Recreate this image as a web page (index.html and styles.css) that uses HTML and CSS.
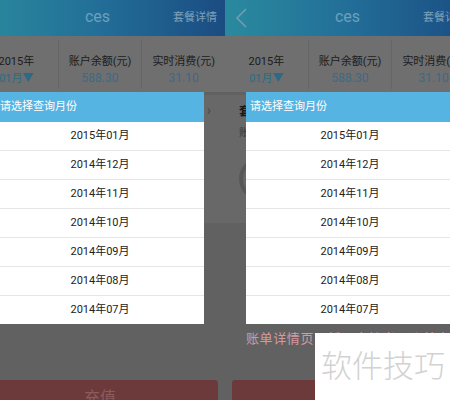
FILE: index.html
```html
<!DOCTYPE html>
<html lang="zh-CN">
<head>
    <meta charset="UTF-8">
    <meta name="viewport" content="width=device-width, initial-scale=1.0">
    <title>ces - 账单查询</title>
    <link rel="stylesheet" href="styles.css">
</head>
<body>
    <div class="screens">
        <!-- first phone: month picker open -->
        <div class="phone first">
            <div class="topbar">
                <span class="back"></span>
                <span class="title">ces</span>
                <span class="more">套餐详情</span>
            </div>
            <div class="stats">
                <div class="stat">
                    <div class="label">2015年</div>
                    <div class="month">01月▼</div>
                </div>
                <div class="stat">
                    <div class="label">账户余额(元)</div>
                    <div class="value">588.30</div>
                </div>
                <div class="stat">
                    <div class="label">实时消费(元)</div>
                    <div class="value">31.10</div>
                </div>
            </div>
            <div class="content">
                <div class="card">
                    <div class="card-head">
                        <span class="card-title">套餐使用情况</span>
                        <span class="chevron">›</span>
                    </div>
                    <div class="card-sub">账单周期 2015.01.01-2015.01.31</div>
                    <div class="rings">
                        <span class="ring"></span>
                        <span class="ring"></span>
                        <span class="ring"></span>
                    </div>
                </div>
            </div>
            <div class="actions">
                <button class="pay">充值</button>
            </div>

            <div class="picker">
                <div class="picker-title">请选择查询月份</div>
                <div class="picker-item">2015年01月</div>
                <div class="picker-item">2014年12月</div>
                <div class="picker-item">2014年11月</div>
                <div class="picker-item">2014年10月</div>
                <div class="picker-item">2014年09月</div>
                <div class="picker-item">2014年08月</div>
                <div class="picker-item">2014年07月</div>
            </div>
        </div>

        <!-- second phone: same picker, with the bill notice below -->
        <div class="phone">
            <div class="topbar">
                <span class="back">
                    <svg width="14" height="22" viewBox="0 0 14 22">
                        <path d="M12 2 L3 11 L12 20" fill="none" stroke="#6f9cb6" stroke-width="1.6"/>
                    </svg>
                </span>
                <span class="title">ces</span>
                <span class="more">套餐详情</span>
            </div>
            <div class="stats">
                <div class="stat">
                    <div class="label">2015年</div>
                    <div class="month">01月▼</div>
                </div>
                <div class="stat">
                    <div class="label">账户余额(元)</div>
                    <div class="value">588.30</div>
                </div>
                <div class="stat">
                    <div class="label">实时消费(元)</div>
                    <div class="value">31.10</div>
                </div>
            </div>
            <div class="content">
                <div class="card">
                    <div class="card-head">
                        <span class="card-title">套餐使用情况</span>
                        <span class="chevron">›</span>
                    </div>
                    <div class="card-sub">账单周期 2015.01.01-2015.01.31</div>
                    <div class="rings">
                        <span class="ring"></span>
                        <span class="ring"></span>
                        <span class="ring"></span>
                    </div>
                </div>
                <div class="notice">账单详情页面暂不支持当月账单查询</div>
            </div>
            <div class="actions">
                <button class="pay">充值</button>
            </div>

            <div class="picker">
                <div class="picker-title">请选择查询月份</div>
                <div class="picker-item">2015年01月</div>
                <div class="picker-item">2014年12月</div>
                <div class="picker-item">2014年11月</div>
                <div class="picker-item">2014年10月</div>
                <div class="picker-item">2014年09月</div>
                <div class="picker-item">2014年08月</div>
                <div class="picker-item">2014年07月</div>
            </div>
        </div>
    </div>

    <div class="stamp">软件技巧</div>
</body>
</html>
```

FILE: styles.css
```css
body {
    margin: 0;
    width: 450px;
    height: 400px;
    overflow: hidden;
    position: relative;
    background: #616161;
    font-family: Roboto, "Noto Sans CJK SC", sans-serif;
}
.screens {
    display: flex;
    margin-left: -25px;
}
.phone {
    position: relative;
    flex: 0 0 250px;
    height: 424px;
    display: flex;
    flex-direction: column;
    background: #616161;
}
.phone.first {
    box-shadow: 1px 0 0 #5a5a5a;
}

/* title bar, dimmed by the open dialog */
.topbar {
    height: 36px;
    flex: 0 0 36px;
    display: flex;
    align-items: center;
    padding: 0 0 4px 9px;
    box-sizing: border-box;
    background: linear-gradient(90deg, #2a8a9e 0%, #226e98 50%, #1b4c82 100%);
}
.back {
    width: 14px;
    height: 22px;
    display: flex;
    margin-top: 4px;
}
.title {
    flex: 1;
    text-align: center;
    color: #6ca0bc;
    font-size: 16px;
    margin-left: 24px;
}
.more {
    width: 52px;
    color: #7ca2ba;
    font-size: 11px;
}

.stats {
    flex: 0 0 56px;
    display: flex;
    background: #6f6f6f;
}
.stat {
    flex: 1;
    text-align: center;
    padding-top: 15px;
    box-sizing: border-box;
    border-left: 1px solid #656565;
    margin: 4px 0 3px;
}
.stat:first-child {
    border-left: none;
}
.label {
    font-size: 11px;
    line-height: 17px;
    color: #1c1c1c;
    margin-top: -2px;
}
.month {
    font-size: 11px;
    line-height: 17px;
    color: #2c6a86;
}
.value {
    font-size: 12px;
    line-height: 17px;
    color: #3c6a86;
}

.content {
    flex: 1;
    display: flex;
    flex-direction: column;
    padding-top: 3px;
}
.card {
    height: 128px;
    background: #686868;
    padding: 0 14px;
}
.card-head {
    display: flex;
    justify-content: space-between;
    align-items: center;
    height: 30px;
}
.card-title {
    font-size: 12px;
    font-weight: bold;
    color: #1a1a1a;
}
.chevron {
    color: #4a4a4a;
    font-size: 14px;
}
.card-sub {
    font-size: 10px;
    color: #3a3a3a;
    line-height: 16px;
}
.rings {
    display: flex;
    gap: 26px;
    margin-top: 16px;
}
.ring {
    width: 44px;
    height: 44px;
    border-radius: 50%;
    border: 4px solid #585858;
    box-sizing: border-box;
}
.notice {
    margin: auto 0 33px 21px;
    font-size: 13px;
    letter-spacing: 0.6px;
    color: #d49aa3;
    white-space: nowrap;
}

.actions {
    flex: 0 0 44px;
    padding: 0 7px;
}
.pay {
    width: 100%;
    height: 44px;
    border: none;
    border-radius: 3px;
    background: #6d3a3c;
    color: #8c5b5d;
    font-family: inherit;
    font-size: 16px;
    line-height: 20px;
    padding: 8px 0 16px;
}

/* month picker dialog over the dimmed screen */
.picker {
    position: absolute;
    top: 92px;
    left: 21px;
    right: 21px;
    background: #fff;
}
.picker-title {
    height: 30px;
    line-height: 30px;
    padding-left: 4px;
    background: #56b4e3;
    color: #fff;
    font-size: 11px;
}
.picker-item {
    height: 28px;
    line-height: 28px;
    text-align: center;
    font-size: 11px;
    color: #222;
    border-bottom: 1px solid #e6e6e6;
}
.picker-item:last-child {
    border-bottom: none;
    height: 28px;
}

.stamp {
    position: absolute;
    left: 315px;
    top: 333px;
    width: 135px;
    height: 67px;
    background: #fff;
    box-sizing: border-box;
    padding: 14px 0 0 6px;
    font-family: "Noto Sans CJK SC", sans-serif;
    font-weight: 300;
    font-size: 31px;
    line-height: 34px;
    color: #d2d2d2;
}
```
